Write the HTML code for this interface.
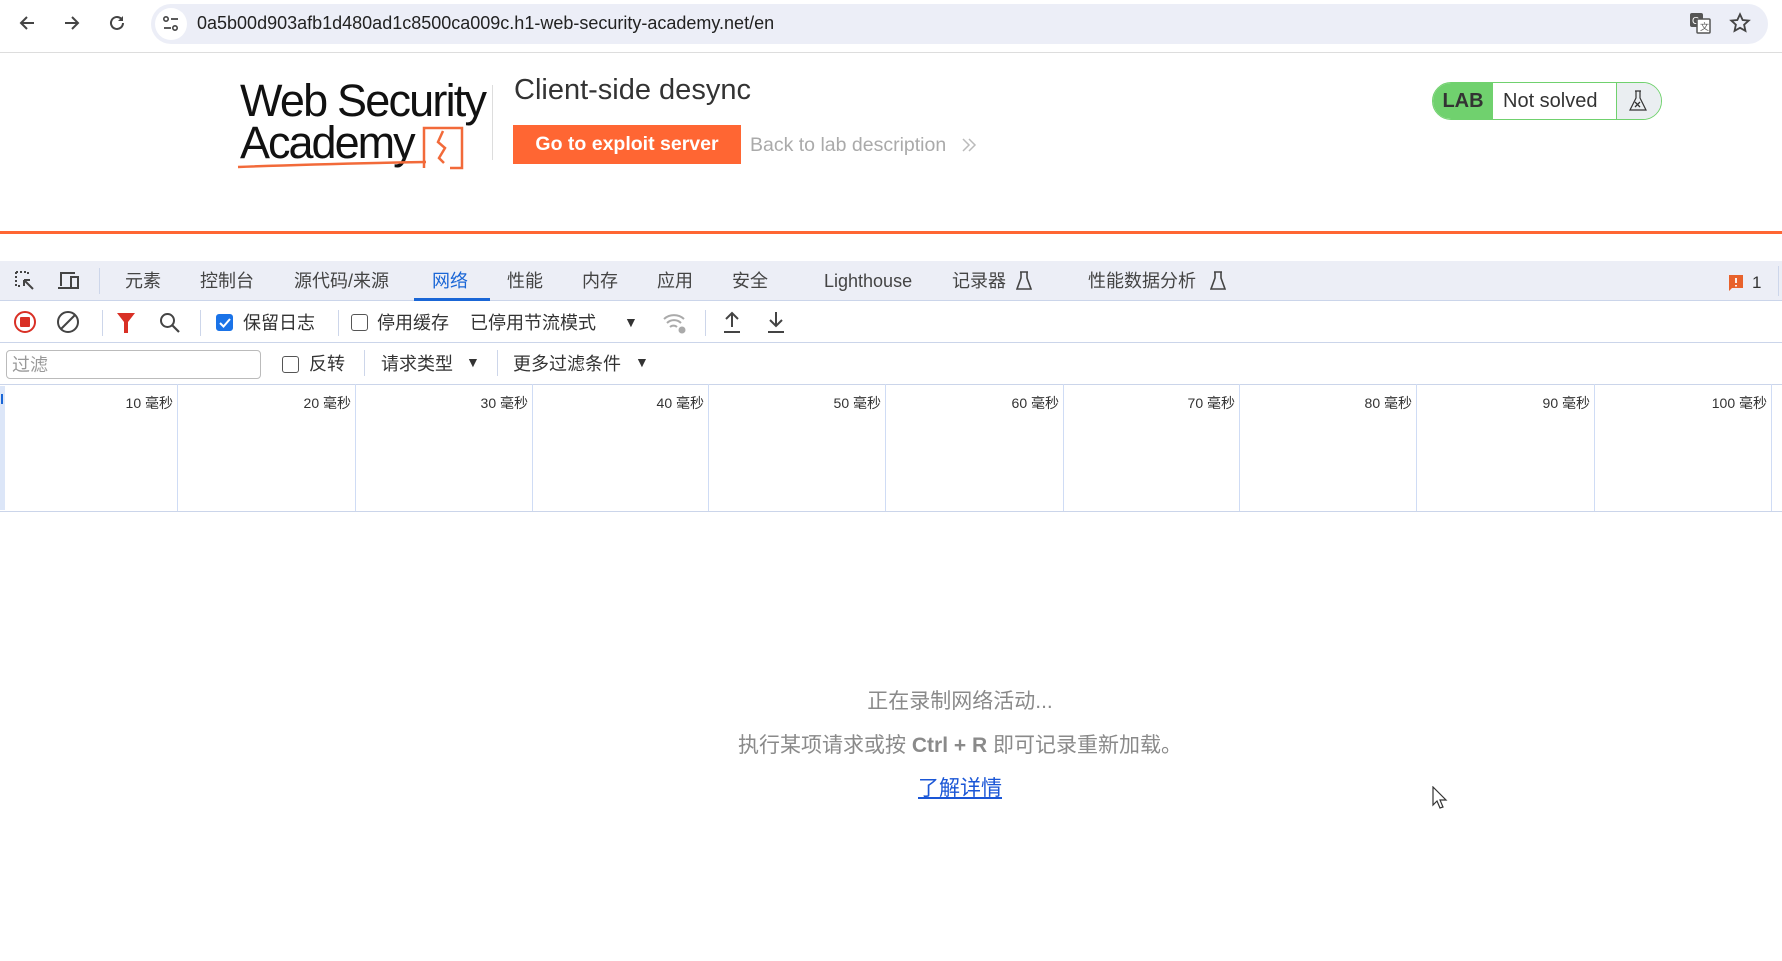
<!DOCTYPE html>
<html><head><meta charset="utf-8"><style>
*{margin:0;padding:0;box-sizing:border-box}
body{width:1782px;height:961px;position:relative;background:#fff;font-family:"Liberation Sans","Noto Sans CJK SC",sans-serif;overflow:hidden;color:#333}
.a{position:absolute;white-space:nowrap}
.tab{position:absolute;top:268px;font-size:18px;color:#444;line-height:26px}
.tb{position:absolute;font-size:18px;color:#333;line-height:24px}
.sep{position:absolute;width:1px;background:#cdd6ea}
.cb{position:absolute;width:17px;height:17px;border:1.5px solid #555;border-radius:3px;background:#fff}
.gl{position:absolute;top:384px;height:127px;width:1px;background:#cfdcf5}
.gt{position:absolute;top:393px;font-size:14px;color:#333;text-align:right;width:80px}
</style></head><body>
<svg class="a" style="left:17px;top:13px" width="20" height="20" viewBox="0 0 20 20"><path d="M17 10H4M10 4L4 10l6 6" stroke="#444" stroke-width="2" fill="none"/></svg>
<svg class="a" style="left:62px;top:13px" width="20" height="20" viewBox="0 0 20 20"><path d="M3 10h13M10 4l6 6-6 6" stroke="#444" stroke-width="2" fill="none"/></svg>
<svg class="a" style="left:107px;top:13px" width="20" height="20" viewBox="0 0 20 20"><path d="M16 10a6 6 0 1 1-2-4.5" stroke="#444" stroke-width="2" fill="none"/><path d="M16 3v5h-5z" fill="#444"/></svg>
<div class="a" style="left:151px;top:4px;width:1617px;height:40px;border-radius:20px;background:#eceef7"></div>
<div class="a" style="left:155px;top:8px;width:32px;height:32px;border-radius:16px;background:#fff"></div>
<svg class="a" style="left:162px;top:15px" width="18" height="18" viewBox="0 0 18 18"><circle cx="4" cy="4" r="2.2" stroke="#444" stroke-width="1.6" fill="none"/><path d="M9 4h7M2 13h7" stroke="#444" stroke-width="1.8"/><circle cx="13" cy="13" r="2.2" stroke="#444" stroke-width="1.6" fill="none"/></svg>
<div class="a" style="left:197px;top:13px;font-size:18px;color:#222">0a5b00d903afb1d480ad1c8500ca009c.h1-web-security-academy.net/en</div>
<svg class="a" style="left:1689px;top:12px" width="22" height="22" viewBox="0 0 22 22"><rect x="1" y="1" width="13" height="14" rx="2" fill="#555"/><text x="3" y="12" font-size="10" fill="#fff" font-family="Liberation Sans">G</text><rect x="8" y="7" width="13" height="14" rx="1" fill="#fff" stroke="#555" stroke-width="1.5"/><text x="11" y="18" font-size="9" fill="#555">文</text></svg>
<svg class="a" style="left:1729px;top:12px" width="22" height="22" viewBox="0 0 24 24"><path d="M12 2.5l2.9 6.2 6.6.7-5 4.5 1.4 6.6L12 17.2l-5.9 3.3 1.4-6.6-5-4.5 6.6-.7z" fill="none" stroke="#444" stroke-width="2"/></svg>
<div class="a" style="left:0;top:52px;width:1782px;height:1px;background:#ddd"></div>
<div class="a" style="left:240px;top:79px;font-size:45px;letter-spacing:-1.8px;color:#111;line-height:44px">Web Security</div>
<div class="a" style="left:240px;top:121px;font-size:45px;letter-spacing:-2px;color:#111;line-height:44px">Academy</div>
<svg class="a" style="left:236px;top:124px" width="230" height="50" viewBox="0 0 230 50"><path d="M2 43 Q80 40 190 38" stroke="#f26a3a" stroke-width="2.5" fill="none"/><path d="M188 44V4h38v40h-12" stroke="#f26a3a" stroke-width="2.5" fill="none"/><path d="M207 7l-5 11 7 6-6 10 5 5" stroke="#f26a3a" stroke-width="2.5" fill="none"/></svg>
<div class="a" style="left:492px;top:85px;width:1px;height:75px;background:#ddd"></div>
<div class="a" style="left:514px;top:74px;font-size:29px;color:#333">Client-side desync</div>
<div class="a" style="left:513px;top:125px;width:228px;height:39px;background:#ff6633;color:#fff;font-weight:bold;font-size:19.5px;line-height:39px;text-align:center">Go to exploit server</div>
<div class="a" style="left:750px;top:134px;font-size:19.5px;color:#aaa">Back to lab description</div>
<svg class="a" style="left:961px;top:137px" width="16" height="16" viewBox="0 0 16 16"><path d="M2 2l6 6-6 6M8 2l6 6-6 6" stroke="#bbb" stroke-width="1.5" fill="none"/></svg>
<div class="a" style="left:1432px;top:82px;width:230px;height:38px;border:1.5px solid #70d16e;border-radius:19px;overflow:hidden;background:#fff">
 <div class="a" style="left:0;top:0;width:60px;height:36px;background:#70d16e;font-weight:bold;font-size:20px;line-height:36px;text-align:center;color:#333">LAB</div>
 <div class="a" style="left:70px;top:0;font-size:20px;line-height:36px;color:#333">Not solved</div>
 <div class="a" style="left:183px;top:0;width:46px;height:36px;background:#eaeef1;border-left:1.5px solid #70d16e"></div>
 <svg class="a" style="left:193px;top:6px" width="24" height="24" viewBox="0 0 24 24"><path d="M9 2h6M10 2v7l-6 12h16l-6-12V2" stroke="#333" stroke-width="1.2" fill="none"/><path d="M9 13l5 5M14 13l-5 5" stroke="#333" stroke-width="1.3"/></svg>
</div>
<div class="a" style="left:0;top:231px;width:1782px;height:3px;background:#ff6633"></div>
<div class="a" style="left:0;top:261px;width:1782px;height:40px;background:#eceef6;border-bottom:1px solid #cbd5ea"></div>
<svg class="a" style="left:14px;top:270px" width="22" height="22" viewBox="0 0 22 22"><path d="M2 2h12v4M2 2v14h4" stroke="#444" stroke-width="2" stroke-dasharray="2 2" fill="none"/><path d="M10 10l9 9M10 10h6M10 10v6" stroke="#444" stroke-width="2"/></svg>
<svg class="a" style="left:57px;top:270px" width="24" height="22" viewBox="0 0 24 22"><path d="M4 16V3h14" stroke="#444" stroke-width="2" fill="none"/><rect x="14" y="7" width="7" height="11" stroke="#444" stroke-width="2" fill="none"/><path d="M1 18h12" stroke="#444" stroke-width="2"/></svg>
<div class="sep" style="left:99px;top:268px;height:26px"></div>
<div class="tab" style="left:125px">元素</div>
<div class="tab" style="left:200px">控制台</div>
<div class="tab" style="left:294px">源代码/来源</div>
<div class="tab" style="left:432px;color:#1a66d6">网络</div>
<div class="a" style="left:414px;top:298px;width:76px;height:3px;background:#1a66d6"></div>
<div class="tab" style="left:507px">性能</div>
<div class="tab" style="left:582px">内存</div>
<div class="tab" style="left:657px">应用</div>
<div class="tab" style="left:732px">安全</div>
<div class="tab" style="left:824px">Lighthouse</div>
<div class="tab" style="left:952px">记录器</div>
<svg class="a" style="left:1016px;top:271px" width="16" height="20" viewBox="0 0 16 20"><path d="M4 1h8M5 1v6l-4 11h14l-4-11V1" stroke="#444" stroke-width="1.6" fill="none"/></svg>
<div class="tab" style="left:1088px">性能数据分析</div>
<svg class="a" style="left:1210px;top:271px" width="16" height="20" viewBox="0 0 16 20"><path d="M4 1h8M5 1v6l-4 11h14l-4-11V1" stroke="#444" stroke-width="1.6" fill="none"/></svg>
<svg class="a" style="left:1729px;top:275px" width="14" height="16" viewBox="0 0 14 16"><path d="M0 0h14v13H3l-3 3z" fill="#e8622c"/><path d="M7 3v5M7 10v1.5" stroke="#fff" stroke-width="1.8"/></svg>
<div class="a" style="left:1752px;top:273px;font-size:17px;color:#333">1</div>
<div class="sep" style="left:1778px;top:266px;height:30px"></div>
<div class="a" style="left:0;top:342px;width:1782px;height:1px;background:#cbd5ea"></div>
<svg class="a" style="left:13px;top:310px" width="24" height="24" viewBox="0 0 24 24"><circle cx="12" cy="12" r="10" stroke="#d93025" stroke-width="2" fill="none"/><rect x="7" y="7" width="10" height="10" rx="1" fill="#d93025"/></svg>
<svg class="a" style="left:56px;top:310px" width="24" height="24" viewBox="0 0 24 24"><circle cx="12" cy="12" r="10" stroke="#444" stroke-width="2" fill="none"/><path d="M5 19L19 5" stroke="#444" stroke-width="2"/></svg>
<div class="sep" style="left:102px;top:310px;height:26px"></div>
<svg class="a" style="left:116px;top:312px" width="20" height="22" viewBox="0 0 20 22"><path d="M1 1h18l-7 9v11h-4V10z" fill="#d93025"/></svg>
<svg class="a" style="left:158px;top:311px" width="24" height="24" viewBox="0 0 24 24"><circle cx="9.5" cy="9.5" r="6.5" stroke="#444" stroke-width="2" fill="none"/><path d="M14 14l7 7" stroke="#444" stroke-width="2.2"/></svg>
<div class="sep" style="left:200px;top:310px;height:26px"></div>
<div class="cb" style="left:216px;top:314px;background:#1a73e8;border-color:#1a73e8"></div>
<svg class="a" style="left:218px;top:316px" width="14" height="14" viewBox="0 0 14 14"><path d="M2 7l3.5 3.5L12 3" stroke="#fff" stroke-width="2" fill="none"/></svg>
<div class="tb" style="left:243px;top:311px">保留日志</div>
<div class="sep" style="left:338px;top:310px;height:26px"></div>
<div class="cb" style="left:351px;top:314px"></div>
<div class="tb" style="left:377px;top:311px">停用缓存</div>
<div class="tb" style="left:470px;top:311px">已停用节流模式</div>
<div class="a" style="left:624px;top:314px;font-size:14px;color:#333">▼</div>
<svg class="a" style="left:662px;top:311px" width="26" height="24" viewBox="0 0 26 24"><path d="M2 8a15 15 0 0 1 20 0M5 12a10 10 0 0 1 14 0M8 16a5 5 0 0 1 7 0" stroke="#aaa" stroke-width="2" fill="none"/><circle cx="20" cy="19" r="3.5" fill="#aaa"/></svg>
<div class="sep" style="left:705px;top:310px;height:26px"></div>
<svg class="a" style="left:722px;top:310px" width="20" height="24" viewBox="0 0 20 24"><path d="M10 17V3M4 9l6-6 6 6M2 22h16" stroke="#444" stroke-width="2" fill="none"/></svg>
<svg class="a" style="left:766px;top:310px" width="20" height="24" viewBox="0 0 20 24"><path d="M10 2v14M4 10l6 6 6-6M2 22h16" stroke="#444" stroke-width="2" fill="none"/></svg>
<div class="a" style="left:0;top:384px;width:1782px;height:1px;background:#cbd5ea"></div>
<div class="a" style="left:6px;top:350px;width:255px;height:29px;border:1px solid #bbb;border-radius:4px"></div>
<div class="tb" style="left:12px;top:353px;color:#999">过滤</div>
<div class="cb" style="left:282px;top:356px"></div>
<div class="tb" style="left:309px;top:352px">反转</div>
<div class="sep" style="left:364px;top:350px;height:26px"></div>
<div class="tb" style="left:381px;top:352px">请求类型</div>
<div class="a" style="left:466px;top:354px;font-size:14px;color:#333">▼</div>
<div class="sep" style="left:497px;top:350px;height:26px"></div>
<div class="tb" style="left:513px;top:352px">更多过滤条件</div>
<div class="a" style="left:635px;top:354px;font-size:14px;color:#333">▼</div>
<div class="a" style="left:0;top:511px;width:1782px;height:1px;background:#cbd5ea"></div>
<div class="a" style="left:0;top:386px;width:5px;height:124px;background:#dce6f8"></div>
<div class="a" style="left:1px;top:394px;width:2px;height:10px;background:#1a66d6"></div>
<div class="gl" style="left:177px"></div><div class="gt" style="left:93px">10 毫秒</div>
<div class="gl" style="left:355px"></div><div class="gt" style="left:271px">20 毫秒</div>
<div class="gl" style="left:532px"></div><div class="gt" style="left:448px">30 毫秒</div>
<div class="gl" style="left:708px"></div><div class="gt" style="left:624px">40 毫秒</div>
<div class="gl" style="left:885px"></div><div class="gt" style="left:801px">50 毫秒</div>
<div class="gl" style="left:1063px"></div><div class="gt" style="left:979px">60 毫秒</div>
<div class="gl" style="left:1239px"></div><div class="gt" style="left:1155px">70 毫秒</div>
<div class="gl" style="left:1416px"></div><div class="gt" style="left:1332px">80 毫秒</div>
<div class="gl" style="left:1594px"></div><div class="gt" style="left:1510px">90 毫秒</div>
<div class="gl" style="left:1771px"></div><div class="gt" style="left:1687px">100 毫秒</div>
<div class="a" style="left:0;width:1920px;text-align:center;top:685px;font-size:21px;color:#8a8a8a">正在录制网络活动...</div>
<div class="a" style="left:0;width:1920px;text-align:center;top:729px;font-size:21px;color:#8a8a8a">执行某项请求或按 <b>Ctrl + R</b> 即可记录重新加载。</div>
<div class="a" style="left:0;width:1920px;text-align:center;top:772px;font-size:21px;color:#1a56d6;text-decoration:underline">了解详情</div>
<svg class="a" style="left:1432px;top:786px" width="16" height="24" viewBox="0 0 16 24"><path d="M1 1v18l4-4 3 7 3-1-3-7h6z" fill="#fff" stroke="#333" stroke-width="1.2"/></svg>
</body></html>
